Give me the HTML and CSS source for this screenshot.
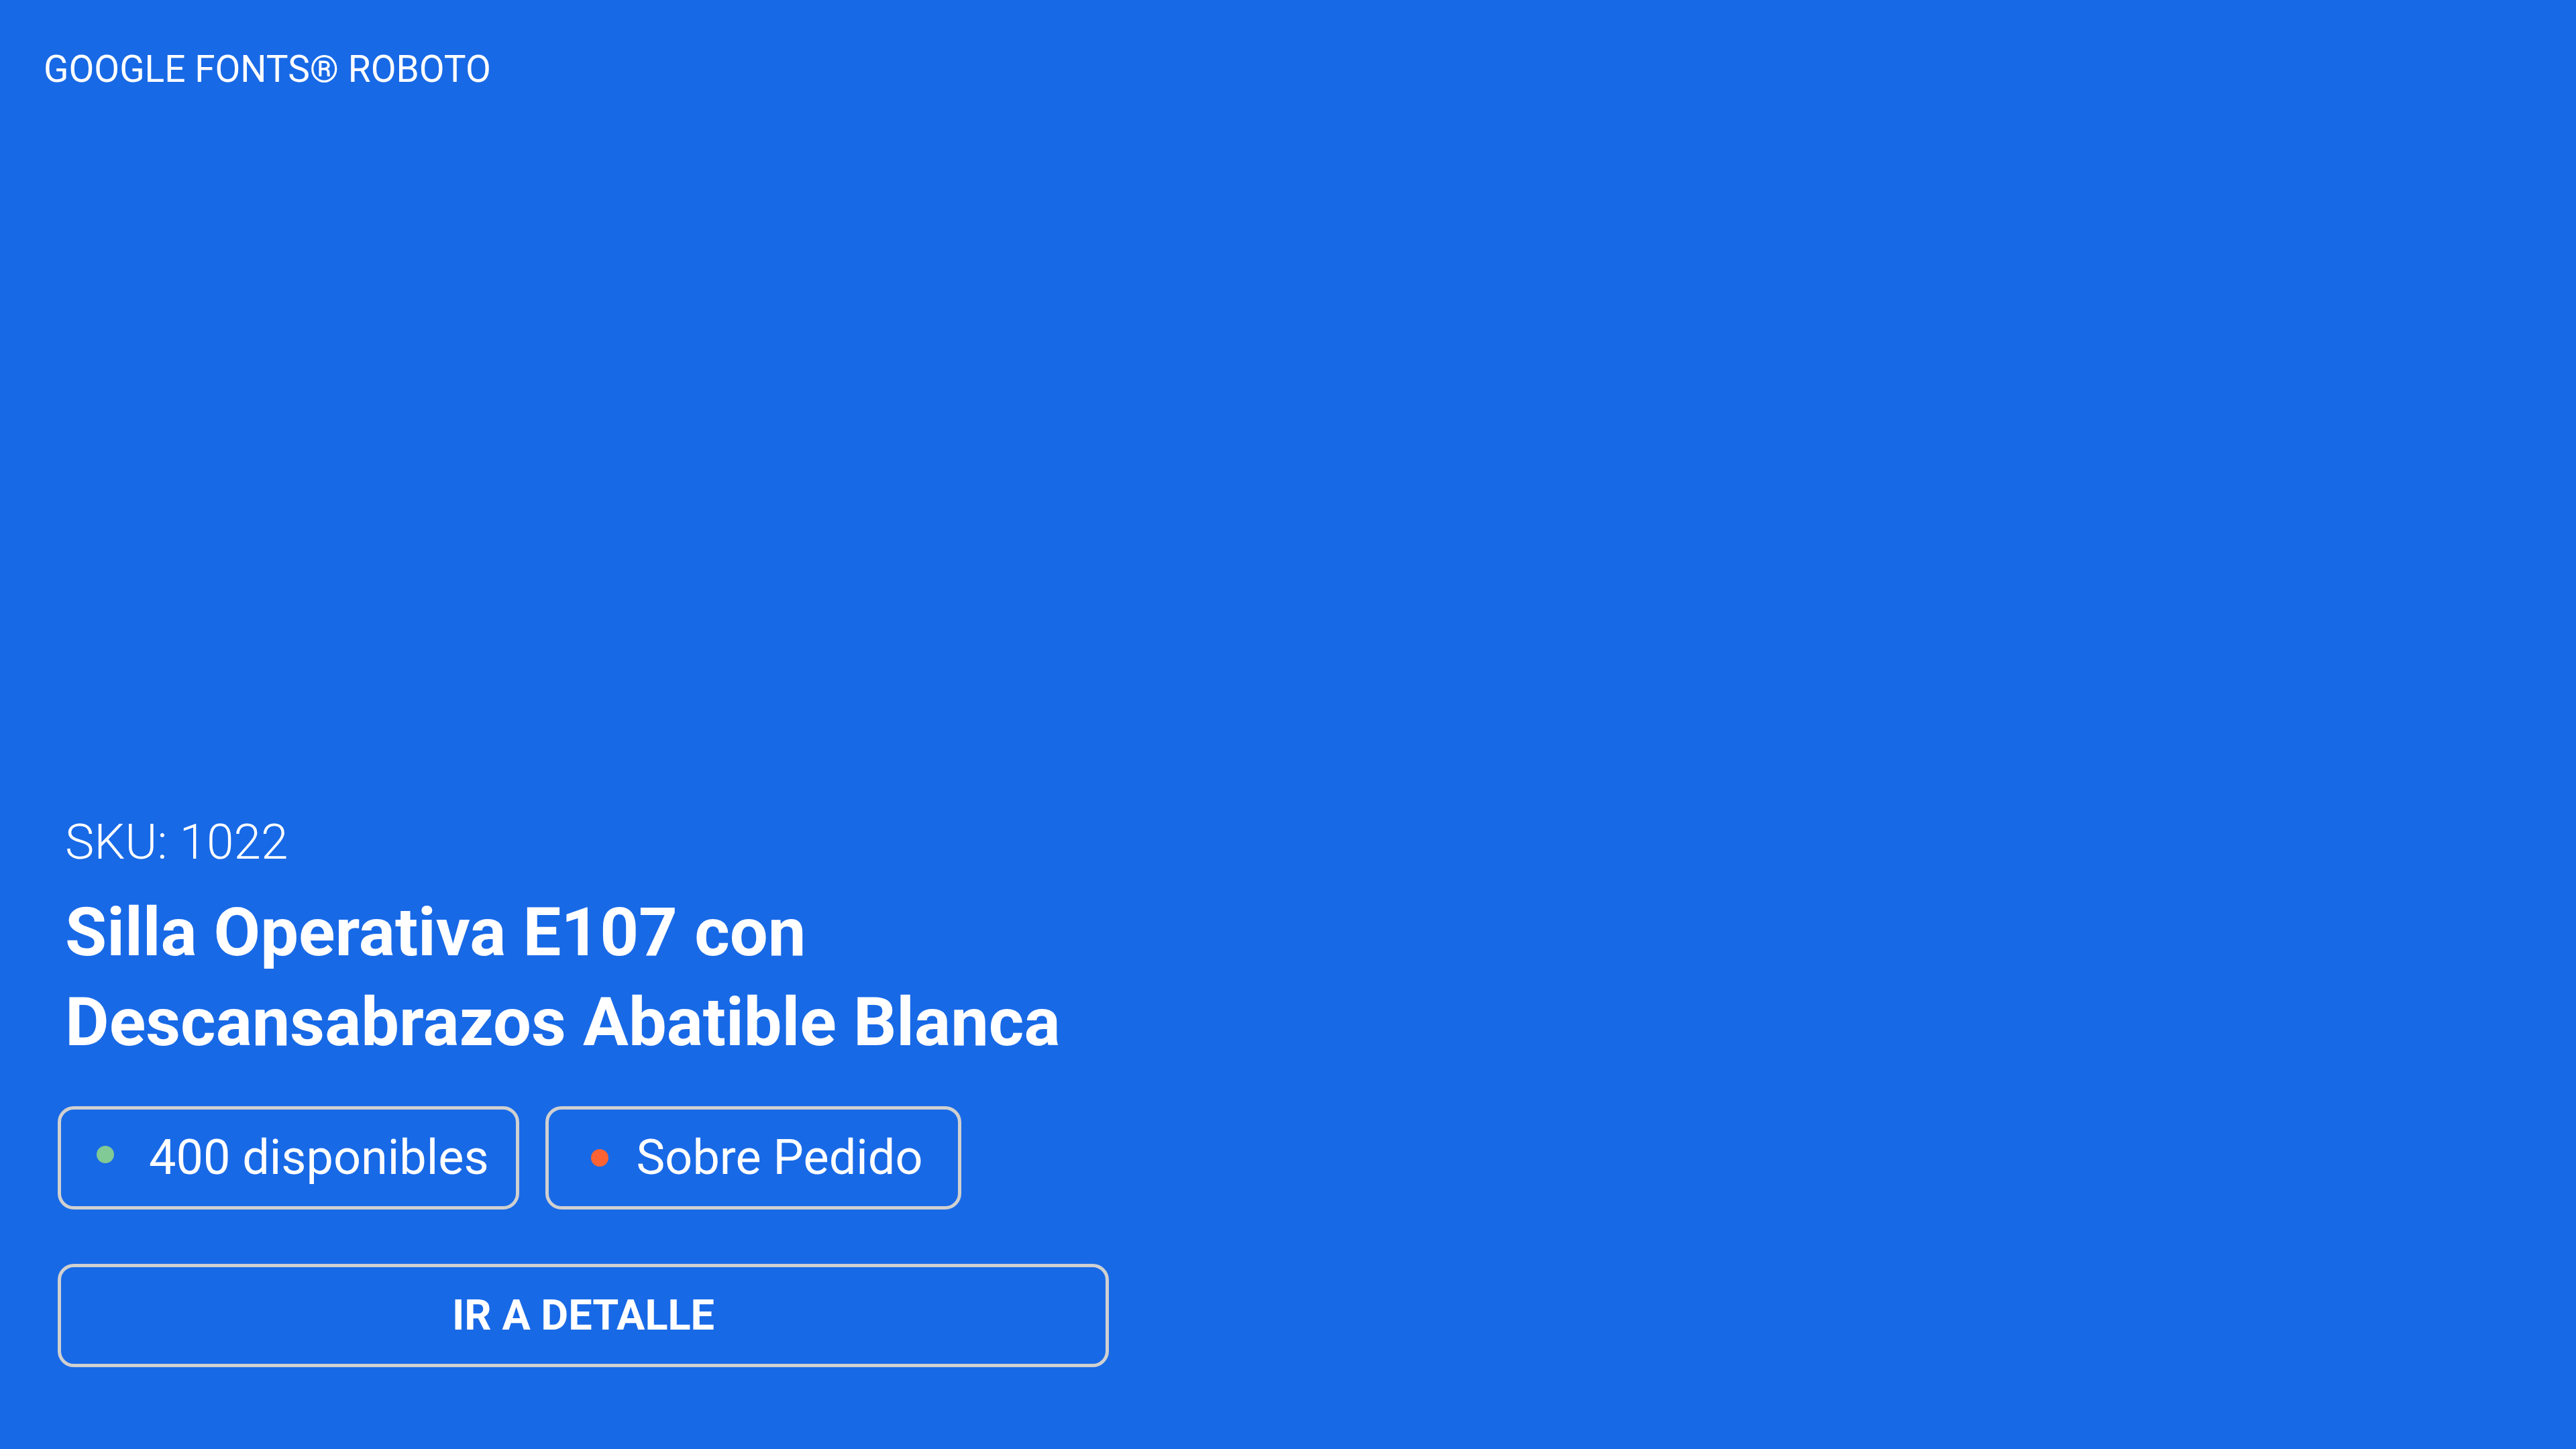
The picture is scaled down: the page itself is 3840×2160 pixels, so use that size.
FILE: index.html
```html
<!DOCTYPE html>
<html lang="es">
<head>
<meta charset="utf-8">
<title>Silla Operativa E107</title>
<link rel="stylesheet" href="styles.css">
</head>
<body>
<main class="screen">
  <header class="brand">GOOGLE FONTS® ROBOTO</header>
  <section class="product">
    <p class="sku">SKU: 1022</p>
    <h1 class="title">Silla Operativa E107 con Descansabrazos Abatible Blanca</h1>
    <div class="chips">
      <div class="chip chip-stock"><span class="dot dot-green"></span><span class="chip-text">400 disponibles</span></div>
      <div class="chip chip-order"><span class="dot dot-orange"></span><span class="chip-text">Sobre Pedido</span></div>
    </div>
    <button class="cta" type="button">IR A DETALLE</button>
  </section>
</main>
</body>
</html>
```
FILE: styles.css
```css
html, body {
  margin: 0;
  padding: 0;
}
body {
  background: #1869e6;
  color: #ffffff;
  font-family: Roboto, "Noto Sans", "Liberation Sans", sans-serif;
}
.screen {
  box-sizing: border-box;
  width: 3840px;
  height: 2160px;
  display: flex;
  flex-direction: column;
  justify-content: space-between;
  padding: 71px 0 122px 0;
}
.brand {
  font-size: 55px;
  line-height: 64px;
  font-weight: 400;
  padding-left: 65px;
}
.product {
  display: flex;
  flex-direction: column;
  width: 1567px;
  margin-left: 86px;
}
.sku {
  margin: 0;
  padding-left: 11px;
  font-size: 73px;
  line-height: 86px;
  font-weight: 300;
}
.title {
  margin: 25px 0 0 0;
  padding-left: 11px;
  font-size: 101px;
  line-height: 134px;
  font-weight: 700;
}
.chips {
  display: flex;
  gap: 39px;
  margin-top: 58px;
}
.chip {
  box-sizing: border-box;
  height: 154px;
  border: 5px solid #d0d0d0;
  border-radius: 24px;
  display: flex;
  align-items: center;
  font-size: 72px;
  line-height: 144px;
  font-weight: 400;
}
.chip-stock {
  padding: 0 40px 0 53px;
  gap: 52px;
}
.chip-order {
  padding: 0 52px 0 63px;
  gap: 42px;
}
.dot {
  flex: none;
  width: 26px;
  height: 26px;
  border-radius: 50%;
}
.dot-green {
  background: #81c995;
  margin-bottom: 10px;
}
.dot-orange {
  background: #ff6333;
}
.cta {
  box-sizing: border-box;
  margin-top: 81px;
  width: 100%;
  height: 154px;
  border: 5px solid #d0d0d0;
  border-radius: 24px;
  background: transparent;
  color: #ffffff;
  font-family: Roboto, "Noto Sans", "Liberation Sans", sans-serif;
  font-size: 63px;
  line-height: 144px;
  font-weight: 700;
  padding: 0;
  cursor: pointer;
}
```
